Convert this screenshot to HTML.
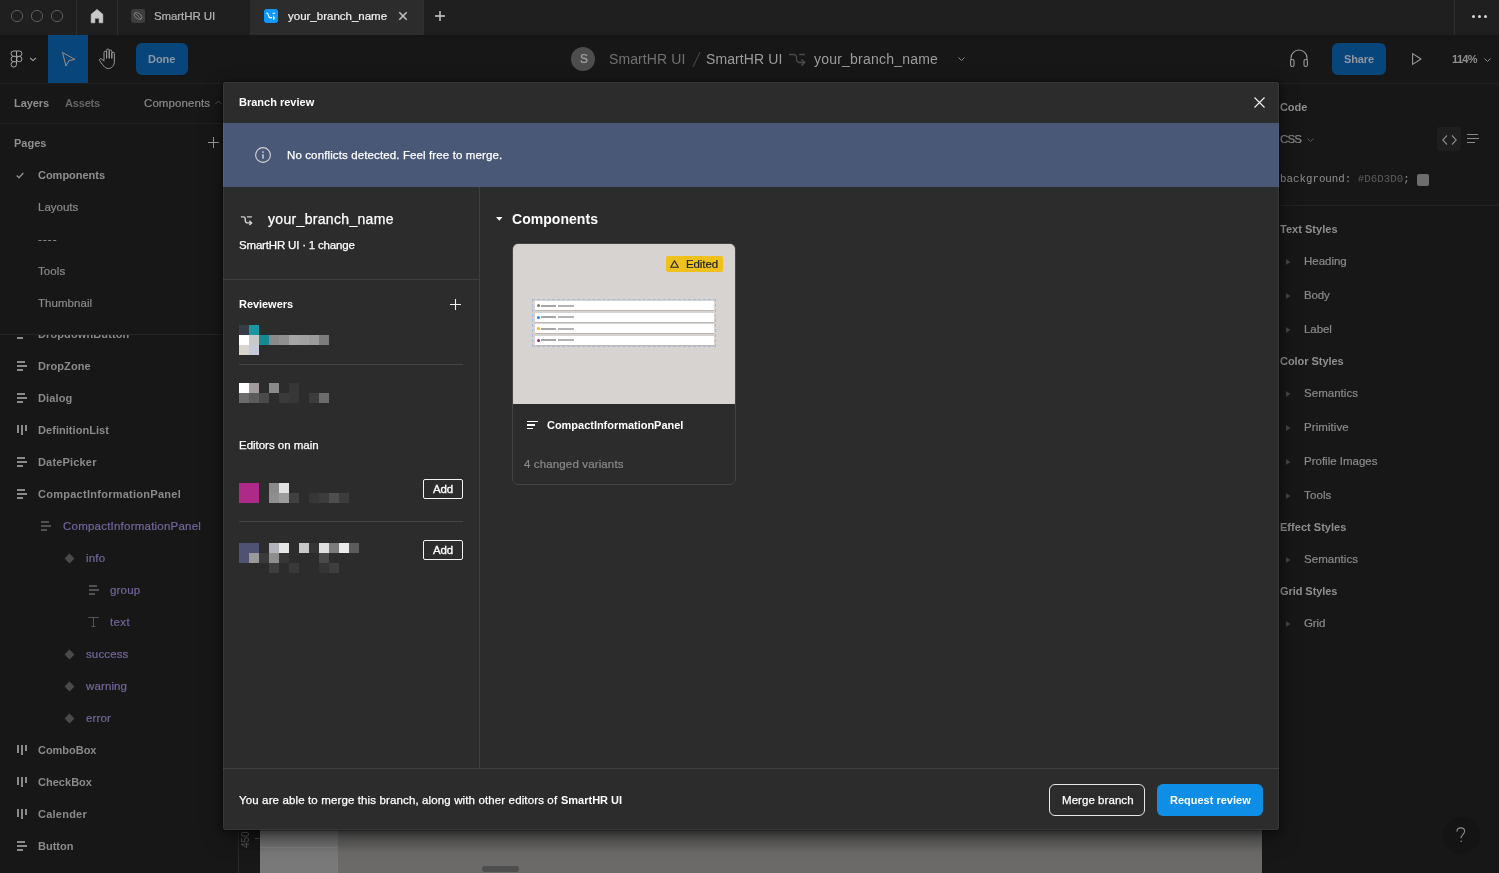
<!DOCTYPE html>
<html><head><meta charset="utf-8">
<style>
*{margin:0;padding:0;box-sizing:border-box}
html,body{width:1499px;height:873px;overflow:hidden;background:#171717;font-family:"Liberation Sans",sans-serif;position:relative}
.a{position:absolute}
.t{position:absolute;white-space:nowrap;line-height:1;will-change:transform}
svg{overflow:visible}
</style></head><body>
<div class="a" style="left:0px;top:0px;width:1499px;height:35px;background:#1f1f1f;"></div>
<div class="a" style="left:0px;top:35px;width:1499px;height:48px;background:#171717;"></div>
<div class="a" style="left:0px;top:83px;width:238px;height:790px;background:#171717;"></div>
<div class="a" style="left:1262px;top:83px;width:237px;height:790px;background:#171717;"></div>
<div class="a" style="left:238px;top:83px;width:1024px;height:790px;background:#6b6a69;"></div>
<div class="a" style="left:238px;top:83px;width:22px;height:790px;background:#181818;"></div>
<div class="a" style="left:238px;top:83px;width:1px;height:790px;background:#2a2a2a;"></div>
<div class="a" style="left:260px;top:83px;width:78px;height:790px;background:#7a7979;"></div>
<div class="a" style="left:260px;top:847px;width:78px;height:1px;background:#858484;"></div>
<div class="a" style="left:238px;top:826px;width:1024px;height:26px;background:transparent;background:linear-gradient(rgba(0,0,0,.3),rgba(0,0,0,0));"></div>
<div class="t" style="left:241px;top:848px;font-size:10px;color:#555;transform:rotate(-90deg);transform-origin:0 0">450</div>
<div class="a" style="left:255px;top:838px;width:4px;height:1px;background:#444;"></div>
<div class="a" style="left:482px;top:866px;width:37px;height:6px;background:#4e4e4e;border-radius:3px;"></div>
<div class="a" style="left:0px;top:83px;width:238px;height:1px;background:#222;"></div>
<div class="a" style="left:1262px;top:83px;width:237px;height:1px;background:#222;"></div>
<svg class="a" style="left:0px;top:0px" width="76" height="35" viewBox="0 0 76 35"><circle cx="17" cy="16" r="5.6" fill="none" stroke="#5c5c5c" stroke-width="1"/><circle cx="37" cy="16" r="5.6" fill="none" stroke="#5c5c5c" stroke-width="1"/><circle cx="57" cy="16" r="5.6" fill="none" stroke="#5c5c5c" stroke-width="1"/></svg>
<div class="a" style="left:76px;top:0px;width:1px;height:35px;background:#2f2f2f;"></div>
<svg class="a" style="left:90px;top:9px" width="14" height="14" viewBox="0 0 14 14"><path d="M1.2 5.2 L7 0.4 L12.8 5.2 V13.8 H9.1 V9.2 H4.9 V13.8 H1.2 Z" fill="#c9c9c9" stroke="#c9c9c9" stroke-width="0.6" stroke-linejoin="round"/></svg>
<div class="a" style="left:117px;top:0px;width:1px;height:35px;background:#2f2f2f;"></div>
<div class="a" style="left:131px;top:9px;width:14px;height:14px;background:#3d3d3d;border-radius:3px;"></div>
<svg class="a" style="left:131px;top:9px" width="14" height="14" viewBox="0 0 14 14"><ellipse cx="7" cy="7" rx="4.2" ry="2.6" transform="rotate(35 7 7)" fill="none" stroke="#777" stroke-width="1"/><line x1="4" y1="4" x2="10" y2="10" stroke="#777" stroke-width="1"/></svg>
<div class="t" style="left:154px;top:11px;font-size:11.5px;font-weight:normal;font-family:'Liberation Sans',sans-serif;color:#b5b5b5;letter-spacing:-0.098px;-webkit-text-stroke:0.2px #b5b5b5;">SmartHR UI</div>
<div class="a" style="left:250px;top:0px;width:173px;height:35px;background:#2c2c2c;"></div>
<div class="a" style="left:264px;top:9px;width:14px;height:14px;background:#0d99ff;border-radius:3px;"></div>
<svg class="a" style="left:264px;top:9px" width="14" height="14" viewBox="0 0 14 14"><path d="M2.2 4.2 H3.6 L5.4 8.6 H8 M8.6 4.2 H11 M9.6 6.8 V11 M9.8 8.9 L11 9.1" fill="none" stroke="#fff" stroke-width="1.1"/></svg>
<div class="t" style="left:287.5px;top:11px;font-size:11.5px;font-weight:normal;font-family:'Liberation Sans',sans-serif;color:#f2f2f2;-webkit-text-stroke:0.2px #f2f2f2;">your_branch_name</div>
<svg class="a" style="left:398px;top:11px" width="10" height="10" viewBox="0 0 10 10"><path d="M1.3 1.3 L8.7 8.7 M8.7 1.3 L1.3 8.7" stroke="#c4c4c4" stroke-width="1.5"/></svg>
<svg class="a" style="left:434px;top:10px" width="12" height="12" viewBox="0 0 12 12"><path d="M6 1 V11 M1 6 H11" stroke="#cfcfcf" stroke-width="1.4"/></svg>
<div class="a" style="left:423px;top:0px;width:1px;height:35px;background:#303030;"></div>
<div class="a" style="left:1454px;top:0px;width:1px;height:35px;background:#303030;"></div>
<div class="a" style="left:1471.5px;top:14.5px;width:3px;height:3px;background:#d8d8d8;border-radius:50%;"></div>
<div class="a" style="left:1477.5px;top:14.5px;width:3px;height:3px;background:#d8d8d8;border-radius:50%;"></div>
<div class="a" style="left:1483.5px;top:14.5px;width:3px;height:3px;background:#d8d8d8;border-radius:50%;"></div>
<svg class="a" style="left:10px;top:50px" width="13" height="18" viewBox="0 0 13 18"><g fill="none" stroke="#a6a6a6" stroke-width="1"><path d="M6.5 1 H3.75 A2.7 2.675 0 0 0 3.75 6.35 H6.5 Z M6.5 1 H9.25 A2.7 2.675 0 0 1 9.25 6.35 H6.5 M6.5 6.35 V11.7 H3.75 A2.7 2.675 0 0 1 3.75 6.35 M6.5 11.7 V14.4 A2.7 2.7 0 1 1 3.75 11.7"/><circle cx="9.25" cy="9.025" r="2.7"/></g></svg>
<svg class="a" style="left:29px;top:57px" width="8" height="5" viewBox="0 0 8 5"><path d="M1.2 1 L4 3.6 L6.8 1" fill="none" stroke="#a0a0a0" stroke-width="1.1"/></svg>
<div class="a" style="left:48px;top:35px;width:40px;height:48px;background:#07457a;"></div>
<svg class="a" style="left:61px;top:51px" width="16" height="17" viewBox="0 0 16 17"><path d="M1.5 1.5 L14 8.5 L8 9.5 L5 15 Z" fill="none" stroke="#9c8f84" stroke-width="1" stroke-linejoin="round"/></svg>
<svg class="a" style="left:98px;top:48px" width="20" height="22" viewBox="0 0 20 22"><path d="M6 12 V4.5 a1.3 1.3 0 0 1 2.6 0 V10 M8.6 10 V2.3 a1.3 1.3 0 0 1 2.6 0 V10 M11.2 10 V3.3 a1.3 1.3 0 0 1 2.6 0 V10 M13.8 10 V5.5 a1.3 1.3 0 0 1 2.6 0 V13 C16.4 18 13.5 20.5 10.5 20.5 C7.5 20.5 6.5 19 4.5 16.5 L1.6 12.6 a1.3 1.3 0 0 1 2 -1.6 L6 13" fill="none" stroke="#999" stroke-width="1" stroke-linejoin="round" stroke-linecap="round"/></svg>
<div class="a" style="left:136px;top:43px;width:52px;height:32px;background:#07457a;border-radius:6px;"></div>
<div class="t" style="left:148.3px;top:54px;font-size:11px;font-weight:bold;font-family:'Liberation Sans',sans-serif;color:#8d98a3;letter-spacing:-0.025px;">Done</div>
<div class="a" style="left:571px;top:47px;width:24px;height:24px;background:#4d4d4d;border-radius:50%;"></div>
<div class="t" style="left:579.6px;top:53px;font-size:12px;font-weight:normal;font-family:'Liberation Sans',sans-serif;color:#a3a3a3;letter-spacing:-1.404px;-webkit-text-stroke:0.2px #a3a3a3;">S</div>
<div class="t" style="left:609px;top:52px;font-size:14px;font-weight:normal;font-family:'Liberation Sans',sans-serif;color:#717171;letter-spacing:0.105px;">SmartHR UI</div>
<svg class="a" style="left:692px;top:51px" width="9" height="17" viewBox="0 0 9 17"><line x1="1" y1="16" x2="8" y2="1" stroke="#4c4c4c" stroke-width="1"/></svg>
<div class="t" style="left:706px;top:52px;font-size:14px;font-weight:normal;font-family:'Liberation Sans',sans-serif;color:#9c9c9c;letter-spacing:0.105px;">SmartHR UI</div>
<svg class="a" style="left:785px;top:48px" width="26" height="22" viewBox="0 0 26 22"><path d="M4 6.5 H9.7 L11.5 8.3 V12.3 L13.7 14.5 H19.6 M16.4 11.2 L19.7 14.5 L16.4 17.8 M14.1 6.5 H19.9" fill="none" stroke="#4e4a4a" stroke-width="1.3"/></svg>
<div class="t" style="left:814.4px;top:52px;font-size:14px;font-weight:normal;font-family:'Liberation Sans',sans-serif;color:#9c9c9c;letter-spacing:0.210px;">your_branch_name</div>
<svg class="a" style="left:958px;top:57px" width="7" height="5" viewBox="0 0 7 5"><path d="M0.5 0.5 L3.5 3.5 L6.5 0.5" fill="none" stroke="#8a8a8a" stroke-width="1"/></svg>
<svg class="a" style="left:1290px;top:49px" width="18" height="18" viewBox="0 0 18 18"><path d="M1 11 V9 a8 8 0 0 1 16 0 V11" fill="none" stroke="#9a9a9a" stroke-width="1.1"/><rect x="0.6" y="10.5" width="3.4" height="7" rx="1.5" fill="none" stroke="#9a9a9a" stroke-width="1.1"/><rect x="14" y="10.5" width="3.4" height="7" rx="1.5" fill="none" stroke="#9a9a9a" stroke-width="1.1"/></svg>
<div class="a" style="left:1332px;top:43px;width:54px;height:32px;background:#07457a;border-radius:6px;"></div>
<div class="t" style="left:1344px;top:54px;font-size:11px;font-weight:bold;font-family:'Liberation Sans',sans-serif;color:#8d98a3;letter-spacing:-0.115px;">Share</div>
<svg class="a" style="left:1412px;top:53px" width="10" height="12" viewBox="0 0 10 12"><path d="M0.6 0.6 L9 6 L0.6 11.4 Z" fill="none" stroke="#9a9a9a" stroke-width="1.1" stroke-linejoin="round"/></svg>
<div class="t" style="left:1452px;top:54px;font-size:11px;font-weight:bold;font-family:'Liberation Sans',sans-serif;color:#8f8f8f;letter-spacing:-0.632px;">114%</div>
<svg class="a" style="left:1484px;top:58px" width="7" height="5" viewBox="0 0 7 5"><path d="M0.5 0.5 L3.5 3.5 L6.5 0.5" fill="none" stroke="#8a8a8a" stroke-width="1"/></svg>
<div class="a" style="left:0px;top:123px;width:238px;height:1px;background:#222;"></div>
<div class="t" style="left:14px;top:98px;font-size:11px;font-weight:bold;font-family:'Liberation Sans',sans-serif;color:#8f8f8f;letter-spacing:-0.079px;">Layers</div>
<div class="t" style="left:65px;top:98px;font-size:11px;font-weight:bold;font-family:'Liberation Sans',sans-serif;color:#666666;letter-spacing:-0.180px;">Assets</div>
<div class="t" style="left:144px;top:98px;font-size:11.5px;font-weight:normal;font-family:'Liberation Sans',sans-serif;color:#8a8a8a;letter-spacing:0.079px;-webkit-text-stroke:0.2px #8a8a8a;">Components</div>
<svg class="a" style="left:215px;top:100px" width="7" height="5" viewBox="0 0 7 5"><path d="M0.5 4 L3.5 1 L6.5 4" fill="none" stroke="#5a5a5a" stroke-width="1"/></svg>
<div class="t" style="left:14px;top:138px;font-size:11px;font-weight:bold;font-family:'Liberation Sans',sans-serif;color:#8f8f8f;">Pages</div>
<svg class="a" style="left:208px;top:137px" width="11" height="11" viewBox="0 0 11 11"><path d="M5.5 0 V11 M0 5.5 H11" stroke="#9a9a9a" stroke-width="1"/></svg>
<svg class="a" style="left:16px;top:172px" width="8" height="7" viewBox="0 0 8 7"><path d="M0.7 3.5 L3 5.8 L7.3 1" fill="none" stroke="#8f8f8f" stroke-width="1.4"/></svg>
<div class="t" style="left:38px;top:170px;font-size:11px;font-weight:bold;font-family:'Liberation Sans',sans-serif;color:#8f8f8f;letter-spacing:-0.022px;">Components</div>
<div class="t" style="left:38px;top:202px;font-size:11.5px;font-weight:normal;font-family:'Liberation Sans',sans-serif;color:#8a8a8a;-webkit-text-stroke:0.2px #8a8a8a;">Layouts</div>
<div class="t" style="left:38px;top:234px;font-size:11.5px;font-weight:normal;font-family:'Liberation Sans',sans-serif;color:#8a8a8a;letter-spacing:1.070px;-webkit-text-stroke:0.2px #8a8a8a;">----</div>
<div class="t" style="left:38px;top:266px;font-size:11.5px;font-weight:normal;font-family:'Liberation Sans',sans-serif;color:#8a8a8a;letter-spacing:0.111px;-webkit-text-stroke:0.2px #8a8a8a;">Tools</div>
<div class="t" style="left:38px;top:298px;font-size:11.5px;font-weight:normal;font-family:'Liberation Sans',sans-serif;color:#8a8a8a;letter-spacing:0.056px;-webkit-text-stroke:0.2px #8a8a8a;">Thumbnail</div>
<div class="a" style="left:0;top:334px;width:238px;height:539px;overflow:hidden">
<div class="a" style="left:17px;top:-5px;width:8px;height:2px;background:#8a8a8a;"></div>
<div class="a" style="left:17px;top:-1px;width:10px;height:2px;background:#8a8a8a;"></div>
<div class="a" style="left:17px;top:3px;width:6px;height:2px;background:#8a8a8a;"></div>
<div class="t" style="left:38px;top:-5px;font-size:11px;font-weight:bold;font-family:'Liberation Sans',sans-serif;color:#8a8a8a;letter-spacing:0.114px;">DropdownButton</div>
<div class="a" style="left:17px;top:27px;width:8px;height:2px;background:#8a8a8a;"></div>
<div class="a" style="left:17px;top:31px;width:10px;height:2px;background:#8a8a8a;"></div>
<div class="a" style="left:17px;top:35px;width:6px;height:2px;background:#8a8a8a;"></div>
<div class="t" style="left:38px;top:27px;font-size:11px;font-weight:bold;font-family:'Liberation Sans',sans-serif;color:#8a8a8a;letter-spacing:0.108px;">DropZone</div>
<div class="a" style="left:17px;top:59px;width:8px;height:2px;background:#8a8a8a;"></div>
<div class="a" style="left:17px;top:63px;width:10px;height:2px;background:#8a8a8a;"></div>
<div class="a" style="left:17px;top:67px;width:6px;height:2px;background:#8a8a8a;"></div>
<div class="t" style="left:38px;top:59px;font-size:11px;font-weight:bold;font-family:'Liberation Sans',sans-serif;color:#8a8a8a;letter-spacing:0.115px;">Dialog</div>
<div class="a" style="left:17px;top:91px;width:2px;height:8px;background:#8a8a8a;"></div>
<div class="a" style="left:21px;top:91px;width:2px;height:10px;background:#8a8a8a;"></div>
<div class="a" style="left:25px;top:91px;width:2px;height:6px;background:#8a8a8a;"></div>
<div class="t" style="left:38px;top:91px;font-size:11px;font-weight:bold;font-family:'Liberation Sans',sans-serif;color:#8a8a8a;letter-spacing:0.052px;">DefinitionList</div>
<div class="a" style="left:17px;top:123px;width:8px;height:2px;background:#8a8a8a;"></div>
<div class="a" style="left:17px;top:127px;width:10px;height:2px;background:#8a8a8a;"></div>
<div class="a" style="left:17px;top:131px;width:6px;height:2px;background:#8a8a8a;"></div>
<div class="t" style="left:38px;top:123px;font-size:11px;font-weight:bold;font-family:'Liberation Sans',sans-serif;color:#8a8a8a;letter-spacing:0.173px;">DatePicker</div>
<div class="a" style="left:17px;top:155px;width:8px;height:2px;background:#8a8a8a;"></div>
<div class="a" style="left:17px;top:159px;width:10px;height:2px;background:#8a8a8a;"></div>
<div class="a" style="left:17px;top:163px;width:6px;height:2px;background:#8a8a8a;"></div>
<div class="t" style="left:38px;top:155px;font-size:11px;font-weight:bold;font-family:'Liberation Sans',sans-serif;color:#8a8a8a;letter-spacing:0.265px;">CompactInformationPanel</div>
<div class="a" style="left:41px;top:187px;width:8px;height:2px;background:#515151;"></div>
<div class="a" style="left:41px;top:191px;width:10px;height:2px;background:#515151;"></div>
<div class="a" style="left:41px;top:195px;width:6px;height:2px;background:#515151;"></div>
<div class="t" style="left:62.6px;top:187px;font-size:11.5px;font-weight:normal;font-family:'Liberation Sans',sans-serif;color:#74669c;letter-spacing:0.223px;-webkit-text-stroke:0.2px #74669c;">CompactInformationPanel</div>
<div class="a" style="left:66.0px;top:220.5px;width:7px;height:7px;background:#4a4a4a;transform:rotate(45deg)"></div>
<div class="t" style="left:86px;top:219px;font-size:11.5px;font-weight:normal;font-family:'Liberation Sans',sans-serif;color:#74669c;letter-spacing:0.165px;-webkit-text-stroke:0.2px #74669c;">info</div>
<div class="a" style="left:89px;top:251px;width:8px;height:2px;background:#515151;"></div>
<div class="a" style="left:89px;top:255px;width:10px;height:2px;background:#515151;"></div>
<div class="a" style="left:89px;top:259px;width:6px;height:2px;background:#515151;"></div>
<div class="t" style="left:110px;top:251px;font-size:11.5px;font-weight:normal;font-family:'Liberation Sans',sans-serif;color:#74669c;letter-spacing:0.177px;-webkit-text-stroke:0.2px #74669c;">group</div>
<svg class="a" style="left:88px;top:283px" width="11" height="10" viewBox="0 0 11 10"><path d="M0.5 1 V0.5 H10.5 V1 M5.5 0.5 V9.5 M3.5 9.5 H7.5" fill="none" stroke="#555" stroke-width="1"/></svg>
<div class="t" style="left:110px;top:283px;font-size:11.5px;font-weight:normal;font-family:'Liberation Sans',sans-serif;color:#74669c;letter-spacing:0.366px;-webkit-text-stroke:0.2px #74669c;">text</div>
<div class="a" style="left:66.0px;top:316.5px;width:7px;height:7px;background:#4a4a4a;transform:rotate(45deg)"></div>
<div class="t" style="left:86px;top:315px;font-size:11.5px;font-weight:normal;font-family:'Liberation Sans',sans-serif;color:#74669c;letter-spacing:0.123px;-webkit-text-stroke:0.2px #74669c;">success</div>
<div class="a" style="left:66.0px;top:348.5px;width:7px;height:7px;background:#4a4a4a;transform:rotate(45deg)"></div>
<div class="t" style="left:86px;top:347px;font-size:11.5px;font-weight:normal;font-family:'Liberation Sans',sans-serif;color:#74669c;letter-spacing:0.118px;-webkit-text-stroke:0.2px #74669c;">warning</div>
<div class="a" style="left:66.0px;top:380.5px;width:7px;height:7px;background:#4a4a4a;transform:rotate(45deg)"></div>
<div class="t" style="left:86px;top:379px;font-size:11.5px;font-weight:normal;font-family:'Liberation Sans',sans-serif;color:#74669c;letter-spacing:0.144px;-webkit-text-stroke:0.2px #74669c;">error</div>
<div class="a" style="left:17px;top:411px;width:2px;height:8px;background:#8a8a8a;"></div>
<div class="a" style="left:21px;top:411px;width:2px;height:10px;background:#8a8a8a;"></div>
<div class="a" style="left:25px;top:411px;width:2px;height:6px;background:#8a8a8a;"></div>
<div class="t" style="left:38px;top:411px;font-size:11px;font-weight:bold;font-family:'Liberation Sans',sans-serif;color:#8a8a8a;letter-spacing:-0.033px;">ComboBox</div>
<div class="a" style="left:17px;top:443px;width:2px;height:8px;background:#8a8a8a;"></div>
<div class="a" style="left:21px;top:443px;width:2px;height:10px;background:#8a8a8a;"></div>
<div class="a" style="left:25px;top:443px;width:2px;height:6px;background:#8a8a8a;"></div>
<div class="t" style="left:38px;top:443px;font-size:11px;font-weight:bold;font-family:'Liberation Sans',sans-serif;color:#8a8a8a;letter-spacing:0.025px;">CheckBox</div>
<div class="a" style="left:17px;top:475px;width:2px;height:8px;background:#8a8a8a;"></div>
<div class="a" style="left:21px;top:475px;width:2px;height:10px;background:#8a8a8a;"></div>
<div class="a" style="left:25px;top:475px;width:2px;height:6px;background:#8a8a8a;"></div>
<div class="t" style="left:38px;top:475px;font-size:11px;font-weight:bold;font-family:'Liberation Sans',sans-serif;color:#8a8a8a;letter-spacing:0.241px;">Calender</div>
<div class="a" style="left:17px;top:507px;width:8px;height:2px;background:#8a8a8a;"></div>
<div class="a" style="left:17px;top:511px;width:10px;height:2px;background:#8a8a8a;"></div>
<div class="a" style="left:17px;top:515px;width:6px;height:2px;background:#8a8a8a;"></div>
<div class="t" style="left:38px;top:507px;font-size:11px;font-weight:bold;font-family:'Liberation Sans',sans-serif;color:#8a8a8a;">Button</div>
<div class="a" style="left:0px;top:0px;width:238px;height:1px;background:#252525;"></div>
</div>
<div class="t" style="left:1279.6px;top:101.5px;font-size:11px;font-weight:bold;font-family:'Liberation Sans',sans-serif;color:#8f8f8f;letter-spacing:-0.075px;">Code</div>
<div class="t" style="left:1279.6px;top:133.5px;font-size:11.5px;font-weight:normal;font-family:'Liberation Sans',sans-serif;color:#8a8a8a;letter-spacing:-0.816px;-webkit-text-stroke:0.2px #8a8a8a;">CSS</div>
<svg class="a" style="left:1307px;top:138px" width="7" height="4" viewBox="0 0 7 4"><path d="M0.5 0.5 L3.5 3.5 L6.5 0.5" fill="none" stroke="#555" stroke-width="1"/></svg>
<div class="a" style="left:1437px;top:127px;width:24px;height:24px;background:#1e1e1e;border-radius:2px;"></div>
<svg class="a" style="left:1442px;top:135px" width="15" height="10" viewBox="0 0 15 10"><path d="M5 0.5 L0.8 5 L5 9.5 M10 0.5 L14.2 5 L10 9.5" fill="none" stroke="#8a8a8a" stroke-width="1.1"/></svg>
<div class="a" style="left:1467px;top:133.5px;width:11px;height:1.2px;background:#8a8a8a;"></div>
<div class="a" style="left:1467px;top:138px;width:12px;height:1.2px;background:#8a8a8a;"></div>
<div class="a" style="left:1467px;top:142px;width:8px;height:1.2px;background:#8a8a8a;"></div>
<div class="t" style="left:1279.6px;top:173.6px;font-size:10.8px;font-weight:normal;font-family:'Liberation Mono',monospace;color:#8f8f8f;">background: <span style="color:#5c5c5c">#D6D3D0</span>;</div>
<div class="a" style="left:1417px;top:174px;width:12px;height:12px;background:#6e6e6e;border-radius:2px;"></div>
<div class="a" style="left:1262px;top:205px;width:237px;height:1px;background:#222;"></div>
<div class="t" style="left:1279.6px;top:224px;font-size:11px;font-weight:bold;font-family:'Liberation Sans',sans-serif;color:#8f8f8f;letter-spacing:0.030px;">Text Styles</div>
<div class="t" style="left:1279.6px;top:356px;font-size:11px;font-weight:bold;font-family:'Liberation Sans',sans-serif;color:#8f8f8f;letter-spacing:-0.049px;">Color Styles</div>
<div class="t" style="left:1279.6px;top:522px;font-size:11px;font-weight:bold;font-family:'Liberation Sans',sans-serif;color:#8f8f8f;letter-spacing:0.028px;">Effect Styles</div>
<div class="t" style="left:1279.6px;top:586px;font-size:11px;font-weight:bold;font-family:'Liberation Sans',sans-serif;color:#8f8f8f;letter-spacing:-0.062px;">Grid Styles</div>
<svg class="a" style="left:1286px;top:259px" width="5" height="6" viewBox="0 0 5 6"><path d="M0 0 L4.5 3 L0 6 Z" fill="#444"/></svg>
<div class="t" style="left:1304.3px;top:256px;font-size:11.5px;font-weight:normal;font-family:'Liberation Sans',sans-serif;color:#8a8a8a;letter-spacing:-0.020px;-webkit-text-stroke:0.2px #8a8a8a;">Heading</div>
<svg class="a" style="left:1286px;top:293px" width="5" height="6" viewBox="0 0 5 6"><path d="M0 0 L4.5 3 L0 6 Z" fill="#444"/></svg>
<div class="t" style="left:1304.3px;top:290px;font-size:11.5px;font-weight:normal;font-family:'Liberation Sans',sans-serif;color:#8a8a8a;letter-spacing:-0.153px;-webkit-text-stroke:0.2px #8a8a8a;">Body</div>
<svg class="a" style="left:1286px;top:327px" width="5" height="6" viewBox="0 0 5 6"><path d="M0 0 L4.5 3 L0 6 Z" fill="#444"/></svg>
<div class="t" style="left:1304.3px;top:324px;font-size:11.5px;font-weight:normal;font-family:'Liberation Sans',sans-serif;color:#8a8a8a;letter-spacing:-0.068px;-webkit-text-stroke:0.2px #8a8a8a;">Label</div>
<svg class="a" style="left:1286px;top:391px" width="5" height="6" viewBox="0 0 5 6"><path d="M0 0 L4.5 3 L0 6 Z" fill="#444"/></svg>
<div class="t" style="left:1304.3px;top:388px;font-size:11.5px;font-weight:normal;font-family:'Liberation Sans',sans-serif;color:#8a8a8a;letter-spacing:0.035px;-webkit-text-stroke:0.2px #8a8a8a;">Semantics</div>
<svg class="a" style="left:1286px;top:425px" width="5" height="6" viewBox="0 0 5 6"><path d="M0 0 L4.5 3 L0 6 Z" fill="#444"/></svg>
<div class="t" style="left:1304.3px;top:422px;font-size:11.5px;font-weight:normal;font-family:'Liberation Sans',sans-serif;color:#8a8a8a;letter-spacing:0.068px;-webkit-text-stroke:0.2px #8a8a8a;">Primitive</div>
<svg class="a" style="left:1286px;top:459px" width="5" height="6" viewBox="0 0 5 6"><path d="M0 0 L4.5 3 L0 6 Z" fill="#444"/></svg>
<div class="t" style="left:1304.3px;top:456px;font-size:11.5px;font-weight:normal;font-family:'Liberation Sans',sans-serif;color:#8a8a8a;-webkit-text-stroke:0.2px #8a8a8a;">Profile Images</div>
<svg class="a" style="left:1286px;top:493px" width="5" height="6" viewBox="0 0 5 6"><path d="M0 0 L4.5 3 L0 6 Z" fill="#444"/></svg>
<div class="t" style="left:1304.3px;top:490px;font-size:11.5px;font-weight:normal;font-family:'Liberation Sans',sans-serif;color:#8a8a8a;letter-spacing:0.131px;-webkit-text-stroke:0.2px #8a8a8a;">Tools</div>
<svg class="a" style="left:1286px;top:557px" width="5" height="6" viewBox="0 0 5 6"><path d="M0 0 L4.5 3 L0 6 Z" fill="#444"/></svg>
<div class="t" style="left:1304.3px;top:554px;font-size:11.5px;font-weight:normal;font-family:'Liberation Sans',sans-serif;color:#8a8a8a;letter-spacing:0.035px;-webkit-text-stroke:0.2px #8a8a8a;">Semantics</div>
<svg class="a" style="left:1286px;top:621px" width="5" height="6" viewBox="0 0 5 6"><path d="M0 0 L4.5 3 L0 6 Z" fill="#444"/></svg>
<div class="t" style="left:1304.3px;top:618px;font-size:11.5px;font-weight:normal;font-family:'Liberation Sans',sans-serif;color:#8a8a8a;letter-spacing:-0.107px;-webkit-text-stroke:0.2px #8a8a8a;">Grid</div>
<div class="a" style="left:1442.5px;top:816.5px;width:37px;height:37px;background:#141414;border-radius:50%;"></div>
<svg class="a" style="left:1455px;top:827px" width="12" height="17" viewBox="0 0 12 17"><path d="M2 4.2 C2 2 3.8 0.9 5.8 0.9 C8 0.9 9.6 2.3 9.6 4.2 C9.6 6.2 7.8 7.1 6.6 9.6 L6 10.8" fill="none" stroke="#8c8c8c" stroke-width="1.1" stroke-linecap="round"/><circle cx="6.2" cy="14.3" r="0.8" fill="#8c8c8c"/></svg>
<div class="a" style="left:223px;top:82px;width:1056px;height:748px;background:#2c2c2c;box-shadow:0 0 0 0.5px rgba(0,0,0,.5), 0 1px 7px 2px rgba(0,0,0,.3), 0 8px 22px rgba(0,0,0,.35);border-radius:2px;overflow:hidden">
<div class="t" style="left:15.800000000000011px;top:15px;font-size:11px;font-weight:bold;font-family:'Liberation Sans',sans-serif;color:#fff;">Branch review</div>
<svg class="a" style="left:1030.5px;top:14.5px" width="11" height="11" viewBox="0 0 11 11"><path d="M0.5 0.5 L10.5 10.5 M10.5 0.5 L0.5 10.5" stroke="#f4f4f4" stroke-width="1.1"/></svg>
<div class="a" style="left:0px;top:41px;width:1056px;height:64px;background:#4a5878;"></div>
<svg class="a" style="left:32px;top:65px" width="16" height="16" viewBox="0 0 16 16"><circle cx="8" cy="8" r="7.4" fill="none" stroke="#d4d4d8" stroke-width="1.1"/><rect x="7.3" y="4.3" width="1.4" height="1.6" fill="#d4d4d8"/><rect x="7.3" y="7.2" width="1.4" height="4.5" fill="#d4d4d8"/></svg>
<div class="t" style="left:63.69999999999999px;top:67.80000000000001px;font-size:11.5px;font-weight:normal;font-family:'Liberation Sans',sans-serif;color:#fff;letter-spacing:0.119px;-webkit-text-stroke:0.25px #fff;">No conflicts detected. Feel free to merge.</div>
<div class="a" style="left:256px;top:105px;width:1px;height:581px;background:#3e3e3e;"></div>
<svg class="a" style="left:17px;top:132px" width="14" height="12" viewBox="0 0 14 12"><path d="M0.9 2.9 H3.3 Q5.3 2.9 5.3 5 V6.5 Q5.3 8.9 7.7 8.9 H10.8 M9.4 6.7 L11.6 8.9 L9.4 11.1 M7 2.9 H11.9" fill="none" stroke="#d2d2d2" stroke-width="1.4"/></svg>
<div class="t" style="left:45px;top:130.3px;font-size:14px;font-weight:normal;font-family:'Liberation Sans',sans-serif;color:#fff;letter-spacing:0.323px;-webkit-text-stroke:0.25px #fff;">your_branch_name</div>
<div class="t" style="left:15.800000000000011px;top:157.9px;font-size:11.5px;font-weight:normal;font-family:'Liberation Sans',sans-serif;color:#fff;letter-spacing:-0.182px;-webkit-text-stroke:0.25px #fff;">SmartHR UI · 1 change</div>
<div class="a" style="left:0px;top:197px;width:256px;height:1px;background:#3e3e3e;"></div>
<div class="t" style="left:16px;top:217.10000000000002px;font-size:11px;font-weight:bold;font-family:'Liberation Sans',sans-serif;color:#fff;letter-spacing:-0.047px;">Reviewers</div>
<svg class="a" style="left:227px;top:216.5px" width="11" height="11" viewBox="0 0 11 11"><path d="M5.5 0 V11 M0 5.5 H11" stroke="#f0f0f0" stroke-width="1.1"/></svg>
<div class="a" style="left:16px;top:243px;width:10px;height:10px;background:#363c48;"></div>
<div class="a" style="left:26px;top:243px;width:10px;height:10px;background:#1a98a0;"></div>
<div class="a" style="left:16px;top:253px;width:10px;height:10px;background:#ffffff;"></div>
<div class="a" style="left:26px;top:253px;width:10px;height:10px;background:#c9c9c9;"></div>
<div class="a" style="left:36px;top:253px;width:10px;height:10px;background:#168a92;"></div>
<div class="a" style="left:46px;top:253px;width:10px;height:10px;background:#8a8a8a;"></div>
<div class="a" style="left:56px;top:253px;width:10px;height:10px;background:#909090;"></div>
<div class="a" style="left:66px;top:253px;width:10px;height:10px;background:#a6a6a6;"></div>
<div class="a" style="left:76px;top:253px;width:10px;height:10px;background:#a2a2a2;"></div>
<div class="a" style="left:86px;top:253px;width:10px;height:10px;background:#9c9c9c;"></div>
<div class="a" style="left:96px;top:253px;width:10px;height:10px;background:#7c7c7c;"></div>
<div class="a" style="left:16px;top:263px;width:10px;height:10px;background:#d8d4d0;"></div>
<div class="a" style="left:26px;top:263px;width:10px;height:10px;background:#c4cad8;"></div>
<div class="a" style="left:16px;top:282px;width:224px;height:1px;background:#444;"></div>
<div class="a" style="left:16px;top:301px;width:10px;height:10px;background:#ffffff;"></div>
<div class="a" style="left:26px;top:301px;width:10px;height:10px;background:#a29c9e;"></div>
<div class="a" style="left:46px;top:301px;width:10px;height:10px;background:#8a8a8a;"></div>
<div class="a" style="left:66px;top:301px;width:10px;height:10px;background:#363636;"></div>
<div class="a" style="left:16px;top:311px;width:10px;height:10px;background:#6c6c6c;"></div>
<div class="a" style="left:26px;top:311px;width:10px;height:10px;background:#5c5c5c;"></div>
<div class="a" style="left:36px;top:311px;width:10px;height:10px;background:#4a4a4a;"></div>
<div class="a" style="left:56px;top:311px;width:10px;height:10px;background:#3a3a3a;"></div>
<div class="a" style="left:66px;top:311px;width:10px;height:10px;background:#363636;"></div>
<div class="a" style="left:86px;top:311px;width:10px;height:10px;background:#3c3c3c;"></div>
<div class="a" style="left:96px;top:311px;width:10px;height:10px;background:#6c6c6c;"></div>
<div class="t" style="left:15.900000000000006px;top:357.9px;font-size:11.5px;font-weight:normal;font-family:'Liberation Sans',sans-serif;color:#fff;letter-spacing:-0.020px;-webkit-text-stroke:0.25px #fff;">Editors on main</div>
<div class="a" style="left:16px;top:401px;width:20px;height:20px;background:#ae2a88;"></div>
<div class="a" style="left:46px;top:401px;width:10px;height:10px;background:#8a8a8a;"></div>
<div class="a" style="left:56px;top:401px;width:10px;height:10px;background:#e2e2e2;"></div>
<div class="a" style="left:46px;top:411px;width:10px;height:10px;background:#8e8e8e;"></div>
<div class="a" style="left:56px;top:411px;width:10px;height:10px;background:#9c9c9c;"></div>
<div class="a" style="left:66px;top:411px;width:10px;height:10px;background:#404040;"></div>
<div class="a" style="left:86px;top:411px;width:10px;height:10px;background:#363636;"></div>
<div class="a" style="left:96px;top:411px;width:10px;height:10px;background:#3c3c3c;"></div>
<div class="a" style="left:106px;top:411px;width:10px;height:10px;background:#4e4e4e;"></div>
<div class="a" style="left:116px;top:411px;width:10px;height:10px;background:#3c3c3c;"></div>
<div class="a" style="left:200px;top:397px;width:40px;height:20px;background:transparent;border:1px solid #f2f2f2;border-radius:2px;"></div>
<div class="t" style="left:209.89999999999998px;top:401.9px;font-size:11.5px;font-weight:normal;font-family:'Liberation Sans',sans-serif;color:#fff;letter-spacing:-0.121px;-webkit-text-stroke:0.3px #fff;">Add</div>
<div class="a" style="left:16px;top:439px;width:224px;height:1px;background:#444;"></div>
<div class="a" style="left:16px;top:461px;width:20px;height:20px;background:#4f5272;"></div>
<div class="a" style="left:26px;top:471px;width:10px;height:10px;background:#9a9a9a;"></div>
<div class="a" style="left:36px;top:471px;width:10px;height:10px;background:#3a3a3a;"></div>
<div class="a" style="left:46px;top:461px;width:10px;height:10px;background:#b2b2ba;"></div>
<div class="a" style="left:56px;top:461px;width:10px;height:10px;background:#e6e6e6;"></div>
<div class="a" style="left:76px;top:461px;width:10px;height:10px;background:#c8c8c8;"></div>
<div class="a" style="left:86px;top:461px;width:10px;height:10px;background:#353535;"></div>
<div class="a" style="left:96px;top:461px;width:10px;height:10px;background:#e0e0e0;"></div>
<div class="a" style="left:106px;top:461px;width:10px;height:10px;background:#7c7c7c;"></div>
<div class="a" style="left:116px;top:461px;width:10px;height:10px;background:#eaeaea;"></div>
<div class="a" style="left:126px;top:461px;width:10px;height:10px;background:#5c5c5c;"></div>
<div class="a" style="left:46px;top:471px;width:10px;height:10px;background:#8e8e8e;"></div>
<div class="a" style="left:56px;top:471px;width:10px;height:10px;background:#363636;"></div>
<div class="a" style="left:96px;top:471px;width:10px;height:10px;background:#4a4a4a;"></div>
<div class="a" style="left:46px;top:481px;width:10px;height:10px;background:#3e3e3e;"></div>
<div class="a" style="left:66px;top:481px;width:10px;height:10px;background:#393939;"></div>
<div class="a" style="left:96px;top:481px;width:10px;height:10px;background:#343434;"></div>
<div class="a" style="left:106px;top:481px;width:10px;height:10px;background:#3e3e3e;"></div>
<div class="a" style="left:200px;top:458px;width:40px;height:20px;background:transparent;border:1px solid #f2f2f2;border-radius:2px;"></div>
<div class="t" style="left:209.89999999999998px;top:462.9px;font-size:11.5px;font-weight:normal;font-family:'Liberation Sans',sans-serif;color:#fff;letter-spacing:-0.121px;-webkit-text-stroke:0.3px #fff;">Add</div>
<svg class="a" style="left:273px;top:135px" width="7" height="4" viewBox="0 0 7 4"><path d="M0 0 H6.5 L3.25 3.8 Z" fill="#fff"/></svg>
<div class="t" style="left:289px;top:130px;font-size:14px;font-weight:bold;font-family:'Liberation Sans',sans-serif;color:#fff;letter-spacing:0.045px;">Components</div>
<div class="a" style="left:289px;top:161px;width:224px;height:242px;background:#2c2c2c;border:1px solid #444;border-radius:6px;overflow:hidden;"></div>
<div class="a" style="left:290px;top:162px;width:222px;height:160px;background:#d6d3d0;border-radius:5px 5px 0 0;"></div>
<div class="a" style="left:443px;top:174px;width:57px;height:16px;background:#f0c01c;border-radius:2px;"></div>
<svg class="a" style="left:447px;top:178px" width="9" height="8" viewBox="0 0 9 8"><path d="M4.5 0.8 L8.3 7.3 H0.7 Z" fill="none" stroke="#1c2030" stroke-width="1.1" stroke-linejoin="round"/></svg>
<div class="t" style="left:462.9px;top:177px;font-size:11.5px;font-weight:normal;font-family:'Liberation Sans',sans-serif;color:#1c2030;letter-spacing:-0.101px;-webkit-text-stroke:0.2px #1c2030;">Edited</div>
<div class="a" style="left:309px;top:217px;width:184px;height:48px;background:transparent;border:1px dashed #a9b9d6;"></div>
<div class="a" style="left:311.6px;top:219.0px;width:179px;height:9px;background:#ffffff;box-shadow:0 1px 0 #bdb8b4;"></div>
<div class="a" style="left:314px;top:222.0px;width:3px;height:3px;background:#777;border-radius:50%;"></div>
<div class="a" style="left:318px;top:222.5px;width:15px;height:2px;background:#a6a6a6;"></div>
<div class="a" style="left:335px;top:222.5px;width:16px;height:2px;background:#b4b4b4;"></div>
<div class="a" style="left:311.6px;top:230.60000000000002px;width:179px;height:9px;background:#ffffff;box-shadow:0 1px 0 #bdb8b4;"></div>
<div class="a" style="left:314px;top:233.60000000000002px;width:3px;height:3px;background:#1e88e5;border-radius:50%;"></div>
<div class="a" style="left:318px;top:234.10000000000002px;width:15px;height:2px;background:#a6a6a6;"></div>
<div class="a" style="left:335px;top:234.10000000000002px;width:16px;height:2px;background:#b4b4b4;"></div>
<div class="a" style="left:311.6px;top:242.2px;width:179px;height:9px;background:#ffffff;box-shadow:0 1px 0 #bdb8b4;"></div>
<div class="a" style="left:314px;top:245.2px;width:3px;height:3px;background:#f0b400;border-radius:50%;"></div>
<div class="a" style="left:318px;top:245.7px;width:15px;height:2px;background:#a6a6a6;"></div>
<div class="a" style="left:335px;top:245.7px;width:16px;height:2px;background:#b4b4b4;"></div>
<div class="a" style="left:311.6px;top:253.8px;width:179px;height:9px;background:#ffffff;box-shadow:0 1px 0 #bdb8b4;"></div>
<div class="a" style="left:314px;top:256.8px;width:3px;height:3px;background:#a0287c;border-radius:50%;"></div>
<div class="a" style="left:318px;top:257.3px;width:15px;height:2px;background:#a6a6a6;"></div>
<div class="a" style="left:335px;top:257.3px;width:16px;height:2px;background:#b4b4b4;"></div>
<div class="a" style="left:304px;top:338.5px;width:11px;height:1.6px;background:#fff;"></div>
<div class="a" style="left:304px;top:342.2px;width:8px;height:1.6px;background:#fff;"></div>
<div class="a" style="left:304px;top:345.9px;width:6px;height:1.6px;background:#fff;"></div>
<div class="t" style="left:323.70000000000005px;top:338px;font-size:11px;font-weight:bold;font-family:'Liberation Sans',sans-serif;color:#fff;letter-spacing:-0.026px;">CompactInformationPanel</div>
<div class="t" style="left:301.4px;top:376.8px;font-size:11.5px;font-weight:normal;font-family:'Liberation Sans',sans-serif;color:#8a8a8a;letter-spacing:0.134px;-webkit-text-stroke:0.2px #8a8a8a;">4 changed variants</div>
<div class="a" style="left:0px;top:686px;width:1056px;height:1px;background:#3e3e3e;"></div>
<div class="t" style="left:16.30000000000001px;top:713px;font-size:11.5px;font-weight:normal;font-family:'Liberation Sans',sans-serif;color:#fff;letter-spacing:0.128px;-webkit-text-stroke:0.25px #fff;">You are able to merge this branch, along with other editors of </div>
<div class="t" style="left:337.79999999999995px;top:713px;font-size:11px;font-weight:bold;font-family:'Liberation Sans',sans-serif;color:#fff;">SmartHR UI</div>
<div class="a" style="left:826px;top:702px;width:96px;height:32px;background:transparent;border:1px solid #e8e8e8;border-radius:6px;"></div>
<div class="t" style="left:838.5999999999999px;top:713px;font-size:11.5px;font-weight:normal;font-family:'Liberation Sans',sans-serif;color:#fff;letter-spacing:0.054px;-webkit-text-stroke:0.25px #fff;">Merge branch</div>
<div class="a" style="left:934px;top:702px;width:106px;height:32px;background:#0f8ee8;border-radius:6px;"></div>
<div class="t" style="left:946.8px;top:713px;font-size:11px;font-weight:bold;font-family:'Liberation Sans',sans-serif;color:#fff;">Request review</div>
<div class="a" style="left:0;top:0;width:1056px;height:748px;border:1px solid rgba(255,255,255,.06);border-radius:2px"></div>
</div>
</body></html>
